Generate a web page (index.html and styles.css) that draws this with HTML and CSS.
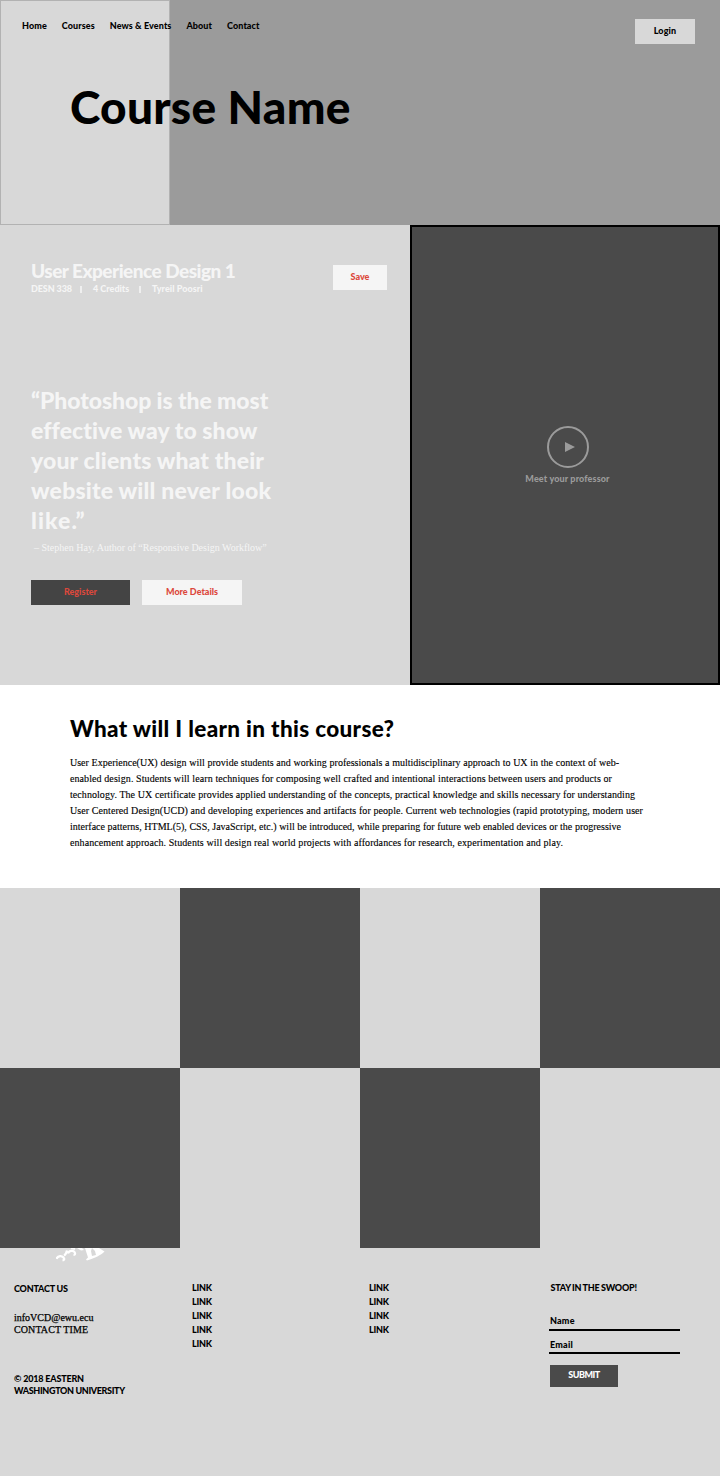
FILE: index.html
```html
<!DOCTYPE html>
<html lang="en">
<head>
<meta charset="utf-8">
<title>Course Name</title>
<link rel="stylesheet" href="styles.css">
</head>
<body>
<header class="hero">
  <div class="hero-panel"></div>
  <div class="hero-content">
    <div class="topbar">
      <nav class="nav"><a>Home</a><a>Courses</a><a>News &amp; Events</a><a>About</a><a>Contact</a></nav>
      <button class="btn login">Login</button>
    </div>
    <h1 class="title">Course Name</h1>
  </div>
</header>
<main>
  <section class="intro">
    <div class="course">
      <div class="course-head">
        <div>
          <h2 class="course-name">User Experience Design 1</h2>
          <div class="meta"><span class="m1">DESN 338</span><i class="bar"></i><span class="m2">4 Credits</span><i class="bar"></i><span class="m3">Tyreil Poosri</span></div>
        </div>
        <button class="btn save">Save</button>
      </div>
      <blockquote class="quote">
        <span class="q1">“Photoshop is the most</span>
        <span class="q2">effective way to show</span>
        <span class="q3">your clients what their</span>
        <span class="q4">website will never look</span>
        <span class="q5">like.”</span>
      </blockquote>
      <p class="cite">– Stephen Hay, Author of “Responsive Design Workflow”</p>
      <div class="actions"><button class="btn register">Register</button><button class="btn details">More Details</button></div>
    </div>
    <div class="video">
      <svg class="play" width="42" height="42" viewBox="0 0 42 42"><circle cx="21" cy="21" r="20" fill="none" stroke="#9b9b9b" stroke-width="2"/><path d="M18 16l10 5-10 5z" fill="#9b9b9b"/></svg>
      <span class="video-label">Meet your professor</span>
    </div>
  </section>
  <section class="about">
    <h2 class="about-title">What will I learn in this course?</h2>
    <div class="copy">
      <span class="l1">User Experience(UX) design will provide students and working professionals a multidisciplinary approach to UX in the context of web-</span>
      <span class="l2">enabled design. Students will learn techniques for composing well crafted and intentional interactions between users and products or</span>
      <span class="l3">technology. The UX certificate provides applied understanding of the concepts, practical knowledge and skills necessary for understanding</span>
      <span class="l4">User Centered Design(UCD) and developing experiences and artifacts for people. Current web technologies (rapid prototyping, modern user</span>
      <span class="l5">interface patterns, HTML(5), CSS, JavaScript, etc.) will be introduced, while preparing for future web enabled devices or the progressive</span>
      <span class="l6">enhancement approach. Students will design real world projects with affordances for research, experimentation and play.</span>
    </div>
  </section>
  <section class="tiles">
    <div></div><div class="dark"></div><div></div><div class="dark"></div>
    <div class="dark"></div><div></div><div class="dark"></div><div></div>
  </section>
</main>
<footer class="footer">
  <div class="contact">
    <svg class="mark" width="50" height="14" viewBox="0 0 50 14"><g fill="none" stroke="#fff" stroke-width="2.200"><path d="M0.500 11c1-3.500 6-4 7.500-.8.600 1.300 0 2-1.500 2.300"/><path d="M8 7.500c2-1 2.500-3 3-5M12 5.500c1-3.500 6-3.500 7-.5.300 1.500-.5 2-1.500 2M15 0l4 1"/></g><path d="M21 0h5l2 2-3 .5zM29 0h7l-1 3 1 5 4-1-1-4-3-3h7l5.500 3.500c-4 4-9 6-17.500 9l-1-1 2-2z" fill="#fff"/></svg>
    <h3 class="foot-title">CONTACT US</h3>
    <p class="info"><span>infoVCD@ewu.ecu</span><br><span class="time">CONTACT TIME</span></p>
    <p class="copyright"><span class="c1">© 2018 EASTERN</span><br><span class="c2">WASHINGTON UNIVERSITY</span></p>
  </div>
  <ul class="links"><li>LINK</li><li>LINK</li><li>LINK</li><li>LINK</li><li>LINK</li></ul>
  <ul class="links"><li>LINK</li><li>LINK</li><li>LINK</li><li>LINK</li></ul>
  <form class="signup">
    <h3 class="signup-title">STAY IN THE SWOOP!</h3>
    <label class="field">Name</label>
    <label class="field email">Email</label>
    <button type="button" class="btn submit">SUBMIT</button>
  </form>
</footer>
</body>
</html>
```
FILE: styles.css
```css
* { box-sizing: border-box; }
body { margin: 0; width: 720px; height: 1477px; background: #fff; color: #000; font: 900 9px/14px Lato, sans-serif; overflow: hidden; white-space: nowrap; }
h1, h2, h3, p, ul, blockquote { margin: 0; padding: 0; font-weight: 900; }
li { list-style: none; }
.btn { display: block; border: 0; border-radius: 0; padding: 0 0 2px; height: 25px; font: 900 9px/22px Lato, sans-serif; color: #dc483c; background: #f5f5f5; }

.hero { display: grid; grid-template-columns: 170px 550px; height: 225px; background: #9b9b9b; }
.hero-panel { grid-area: 1 / 1; background: #d8d8d8; border: 1px solid #b2b2b2; }
.hero-content { grid-area: 1 / 1 / 2 / 3; padding: 17px 25px 0 22px; }
.topbar { display: flex; justify-content: space-between; height: 60px; }
.nav { display: flex; gap: 15px; line-height: 17px; letter-spacing: 0.09px; }
.login { width: 60px; margin-top: 2px; color: #000; background: #d8d8d8; letter-spacing: 0.15px; }
.title { margin: 0 0 0 48px; font-size: 46px; line-height: 60px; letter-spacing: 0.27px; }

.intro { display: grid; grid-template-columns: 410px 310px; height: 460px; }
.course { background: #d8d8d8; color: #f5f5f5; padding: 34px 23px 0 31px; }
.course-head { display: flex; justify-content: space-between; height: 126px; }
.course-name { font-size: 19px; line-height: 24px; letter-spacing: -0.52px; }
.meta { display: flex; align-items: center; line-height: 12px; }
.m1 { width: 41px; letter-spacing: -0.1px; }
.m2 { width: 38px; }
.m3 { letter-spacing: 0.05px; }
.bar { width: 2px; height: 7px; background: #efefef; margin: 0 11px 0 8px; }
.save { width: 54px; margin-top: 6px; line-height: 21px; }
.quote { font-size: 23px; line-height: 30px; height: 155px; }
.quote span { display: block; }
.q1 { letter-spacing: -0.09px; } .q2 { letter-spacing: 0.07px; } .q3 { letter-spacing: 0.14px; }
.q4 { letter-spacing: 0.2px; } .q5 { letter-spacing: 1.1px; }
.cite { font: 400 10px/16px "Liberation Serif", serif; padding-left: 3px; }
.actions { display: flex; gap: 12px; margin-top: 24px; }
.register { width: 99px; background: #444; }
.details { width: 100px; }
.video { background: #4a4a4a; border: 2px solid #000; padding: 199px 0 0 5px; display: flex; flex-direction: column; align-items: center; color: #9b9b9b; }
.play { display: block; }
.video-label { margin-top: 4px; letter-spacing: 0.14px; }

.about { height: 203px; padding: 29px 70px 0; }
.about-title { font-size: 22.5px; line-height: 30px; letter-spacing: 0.34px; }
.copy { margin-top: 11px; font: 400 10px/16px "Liberation Serif", serif; -webkit-text-stroke: 0.12px #000; }
.copy span { display: block; text-align: justify; text-align-last: justify; }
.l1 { width: 549px; } .l2 { width: 542px; letter-spacing: 0.08px; } .l3 { width: 565px; letter-spacing: 0.06px; }
.l4 { width: 573px; letter-spacing: 0.06px; } .l5 { width: 551px; } .l6 { width: 493px; letter-spacing: 0.08px; }

.tiles { display: grid; grid-template-columns: repeat(4, 180px); grid-auto-rows: 180px; background: #d8d8d8; }
.dark { background: #4a4a4a; }

.footer { height: 228px; background: #d8d8d8; display: grid; grid-template-columns: 178px 177px 180px 131px; padding-left: 14px; }
.mark { display: block; margin-left: 42px; }
.foot-title { font-size: 9px; line-height: 14px; margin-top: 20px; letter-spacing: -0.2px; }
.info { font: 400 10px/12px "Liberation Serif", serif; margin-top: 16px; -webkit-text-stroke: 0.25px #000; }
.time { letter-spacing: 0.1px; }
.copyright { line-height: 12px; margin-top: 37px; }
.c1 { letter-spacing: -0.18px; } .c2 { letter-spacing: -0.34px; }
.links { padding-top: 33px; line-height: 14.1px; letter-spacing: -0.2px; }
.signup { padding-top: 33px; }
.signup-title { font-size: 9px; line-height: 14px; padding-left: 1.5px; margin-bottom: 18px; letter-spacing: -0.22px; word-spacing: -0.4px; }
.field { display: block; height: 18px; border-bottom: 2px solid #000; padding-left: 1px; line-height: 16px; letter-spacing: 0.2px; }
.email { margin-top: 6px; height: 17px; line-height: 15px; }
.submit { width: 68px; height: 22px; margin: 11px 0 0 1px; background: #4a4a4a; color: #fff; line-height: 20px; letter-spacing: -0.5px; }
```
